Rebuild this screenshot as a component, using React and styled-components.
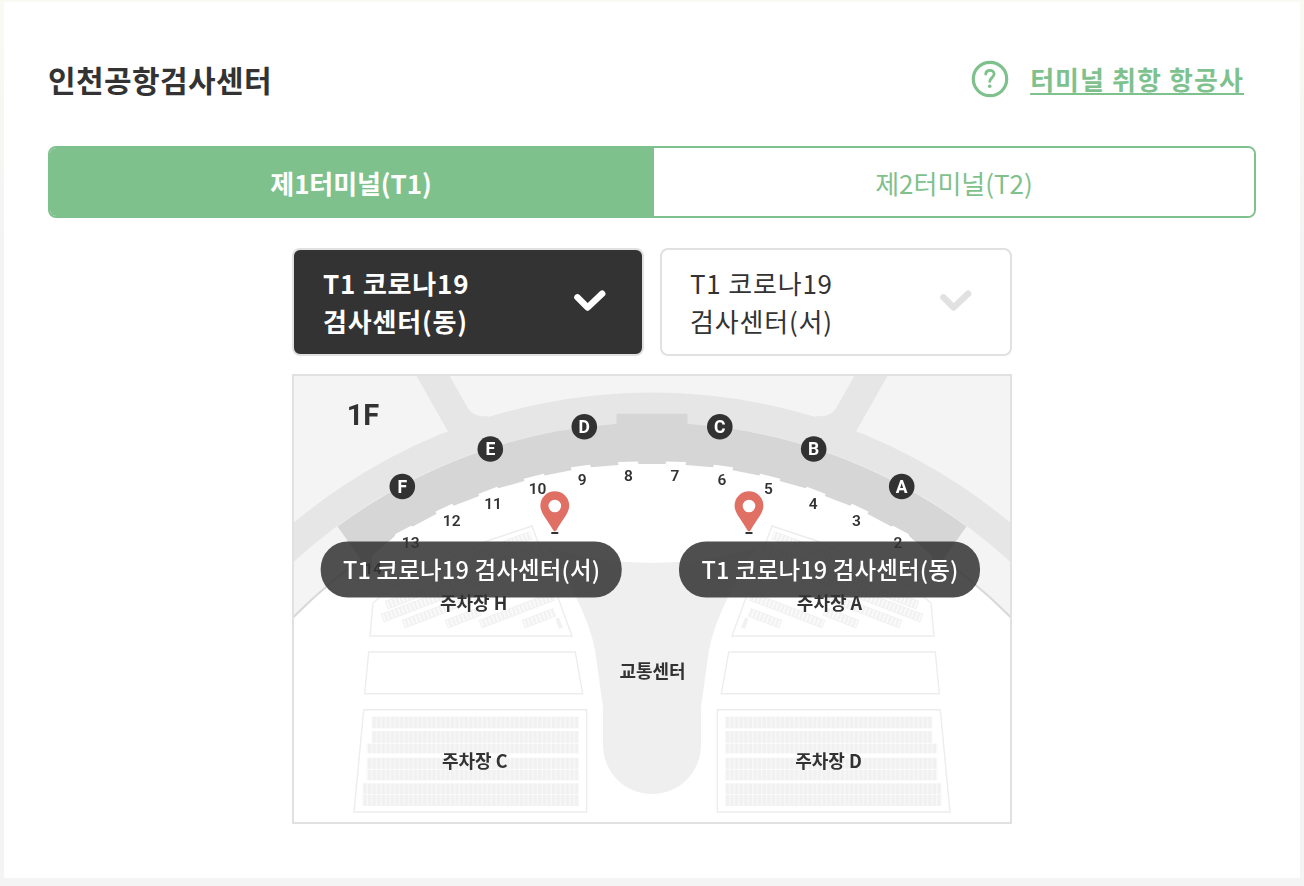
import React, { useState } from 'react';
import styled, { createGlobalStyle, css } from 'styled-components';

const green = '#7fc18d';
const dark = '#333';
const line = '#e1e1e1';

const GlobalStyle = createGlobalStyle`
  * {
    box-sizing: border-box;
  }
  body {
    margin: 0;
    min-height: 886px;
    background: linear-gradient(#f9faf1 0, #f4f4f4 240px);
    color: ${dark};
    font-family: 'Noto Sans CJK KR', 'Noto Sans', sans-serif;
  }
  button {
    font-family: inherit;
    cursor: pointer;
  }
`

const Card = styled.section`
  margin: 0 4px;
  height: 878px;
  border-top: 2px solid #fafaf3;
  padding: 53px 44px 0;
  background: #fff;
`

const Header = styled.header`
  display: flex;
  align-items: center;
  justify-content: space-between;
  height: 48px;
  padding-right: 12px;
`

const Title = styled.h2`
  margin: 0;
  font-size: 30px;
  font-weight: 700;
  line-height: 46px;
  letter-spacing: 0.4px;
`

const HelpLink = styled.a`
  display: flex;
  align-items: center;
  gap: 21px;
  color: ${green};
  font-size: 26px;
  font-weight: 700;
  line-height: 42px;
  letter-spacing: 1.07px;
  text-decoration: none;
`

const LinkText = styled.span`
  text-decoration: underline;
  text-decoration-thickness: 2px;
  text-decoration-skip-ink: none;
  text-underline-offset: 3px;
`

const Tabs = styled.div`
  display: flex;
  height: 72px;
  margin-top: 43px;
  border: 2px solid ${green};
  border-radius: 8px;
  overflow: hidden;
`

const Tab = styled.button`
  width: 602px;
  padding: 0;
  border: 0;
  background: #fff;
  color: ${green};
  font-size: 26px;
  font-weight: 400;

  & + & {
    border-left: 2px solid ${green};
  }
  ${props => props.$active && css`
    background: ${green};
    color: #fff;
    font-weight: 700;
    letter-spacing: -0.1px;
  `}
`

const Content = styled.div`
  width: 720px;
  margin: 30px auto 0;
`

const Centers = styled.div`
  display: grid;
  grid-template-columns: 1fr 1fr;
  gap: 16px;
`

const CenterButton = styled.button`
  display: flex;
  align-items: center;
  justify-content: space-between;
  height: 108px;
  padding: 0 38px 0 28px;
  border: 2px solid ${line};
  border-radius: 8px;
  background: ${props => props.$active ? dark : '#fff'};
  color: ${props => props.$active ? '#fff' : dark};
  font-size: 26px;
  font-weight: ${props => props.$active ? 700 : 400};
  line-height: 38px;
  letter-spacing: 0.8px;
  text-align: left;

  &:first-child {
    padding: 0 36px 0 29px;
  }
  svg {
    margin-bottom: 2px;
    color: ${props => props.$active ? '#fff' : line};
  }
`

const MapFrame = styled.div`
  height: 450px;
  margin-top: 18px;
  border: 2px solid ${line};
  background: #fff;

  svg {
    display: block;
  }
`

const MapText = styled.text`
  fill: ${props => props.$light ? '#fff' : dark};
  font-family: ${props => props.$latin ? "Roboto, 'Noto Sans CJK KR', sans-serif" : "'Noto Sans CJK KR', sans-serif"};
  font-size: ${props => props.$size || 18}px;
  font-weight: ${props => props.$weight || 500};
  text-anchor: middle;
`

const HelpIcon = () => (
  <svg width="38" height="38" viewBox="0 0 38 38" fill="none" stroke="currentColor">
    <circle cx="19" cy="19" r="16.7" strokeWidth="3.2" />
    <path d="M14.7 14.2c.2-2.4 1.9-3.8 4.2-3.8 2.4 0 4.2 1.5 4.2 3.7 0 3.5-4.3 3.5-4.3 7.3" strokeWidth="2.8" strokeLinecap="round" />
    <circle cx="18.7" cy="26.2" r="1.8" fill="currentColor" stroke="none" />
  </svg>
)

const Check = () => (
  <svg width="32" height="22" viewBox="0 0 32 22" fill="none" stroke="currentColor" strokeWidth="6.4" strokeLinecap="round" strokeLinejoin="round">
    <path d="M3.4 7.3 13.6 17.5 28.2 3.6" />
  </svg>
)

// upper-left half of the boarding gates edge, from gate 13 to gate 8
const gateEdge = [
  [372, 556], [395, 536], [395, 534.3], [411, 525.7], [412.7, 526.5], [436.7, 513.7],
  [435.3, 511.7], [452, 503.7], [453.7, 505.7], [479.3, 496], [478.3, 494], [497, 486.7],
  [498.3, 488.3], [524.3, 481], [523.7, 478.7], [543.7, 473.7], [544.5, 475.5], [571.5, 470.3],
  [571, 467.3], [590, 464.7], [591, 467.3], [618.5, 465], [618, 462], [638, 461.5], [638.5, 464],
]
const hall = [
  [372, 600],
  ...gateEdge,
  ...[...gateEdge].reverse().map(([x, y]) => [1304 - x, y]),
  [932, 600],
].join(' ')

const gates = [
  ['14', 373, 574], ['13', 410.7, 547.5], ['12', 451.7, 525.5], ['11', 493, 508.5], ['10', 537.5, 494],
  ['9', 582.3, 484.5], ['8', 628.5, 480.5], ['7', 675, 480.5], ['6', 722, 484.5], ['5', 768.5, 494],
  ['4', 813.3, 508.5], ['3', 856.5, 525.5], ['2', 898, 547.5],
]

const counters = [
  ['F', 402.3, 486.5], ['E', 490.3, 449], ['D', 584.3, 426.7],
  ['C', 719.8, 426.7], ['B', 813.7, 449], ['A', 901.7, 486.5],
]

const stallRows = [
  [371.7, 716.7, 11.6], [371.7, 731, 11.8], [366.7, 743.6, 9.8], [366.7, 757.7, 11.2],
  [366.7, 769.6, 10.7], [362.7, 783.3, 11.1], [362.7, 795, 11],
]

const slantedRows = [
  [381, 615, 190], [402, 621, 80], [445, 621, 36], [479, 621, 88], [522, 621, 34],
  [385, 602, 160], [430, 570, 120],
]

const Parking = () => (
  <g>
    <g fill="#fff" stroke="#ededed" strokeWidth="1.4">
      <path d="M532 526 481 543 392 587 373 603 370 636H572Z" />
      <path d="M368.7 652H575.3L582.7 693.7H364.7Z" />
      <path d="M363.7 709.7H586.7V812H354Z" />
    </g>
    {stallRows.map(([x, y, h]) => (
      <rect key={y} x={x} y={y} width={578.7 - x} height={h} fill="url(#stalls)" />
    ))}
    <g clipPath="url(#lot)">
      {slantedRows.map(([x, y, w]) => (
        <g key={`${x}-${y}`} transform={`translate(${x} ${y}) rotate(-21)`}>
          <rect width={w} height="9" y="-1" fill="url(#stallsOutline)" />
        </g>
      ))}
      <path d="M557 618l4 10" stroke="#f1f1f1" strokeWidth="4" />
    </g>
  </g>
)

const Road = () => <path d="M416 375H449L467.7 407.7Q474 418 488 416L500 440 447.7 431Z" fill="#e6e6e6" />

const Pin = ({ x }) => (
  <g transform={`translate(${x} 506)`}>
    <path d="M-3.5 27h7" stroke={dark} strokeWidth="2" />
    <path fillRule="evenodd" fill="#e07064" d="M0-14.7A14.4 14.4 0 0 0-14.4-.3C-14.4 7.5-6.5 15-1.6 24.3Q0 26.6 1.6 24.3C6.5 15 14.4 7.5 14.4-.3A14.4 14.4 0 0 0 0-14.7ZM0-6.3A6.3 6.3 0 1 1 0 6.3 6.3 6.3 0 0 1 0-6.3Z" />
  </g>
)

const Label = ({ x, children }) => (
  <g>
    <rect x={x - 150.5} y="541.5" width="301" height="56" rx="27" fill="#333" fillOpacity="0.86" />
    <MapText x={x + 0.4} y="578.5" $size={23.5} $weight={500} $light textLength="257">{children}</MapText>
  </g>
)

const TerminalMap = () => (
  <svg width="716" height="446" viewBox="294 376 716 446">
    <defs>
      <pattern id="stalls" width="4.6" height="30" patternUnits="userSpaceOnUse">
        <rect width="4.6" height="30" fill="#f8f8f8" />
        <rect width="3.2" height="30" fill="#f1f1f1" />
      </pattern>
      <pattern id="stallsOutline" width="4" height="9" y="-1" patternUnits="userSpaceOnUse">
        <rect x="0.5" y="0.5" width="3" height="8" fill="#fafafa" stroke="#f1f1f1" />
      </pattern>
      <clipPath id="lot">
        <path d="M530 531 484 547 396 590 377 606 374 630H566Z" />
      </clipPath>
      <filter id="soft" x="0" y="0" width="1" height="1">
        <feGaussianBlur stdDeviation="0.6" />
      </filter>
    </defs>

    <g filter="url(#soft)">
      <rect x="290" y="372" width="724" height="454" fill="#f4f4f4" />
      <Road />
      <g transform="translate(1304) scale(-1 1)"><Road /></g>
      <circle cx="652" cy="950.5" r="558" fill="#e6e6e6" />
      <circle cx="652" cy="952.5" r="530" fill="#f4f4f4" />
      <circle cx="652" cy="970" r="503" fill="#fff" stroke="#d8d8d8" strokeWidth="2" />

      <path d="M337.5 526.5A530 530 0 0 1 616.5 423.7V413.7H687.5V423.7A530 530 0 0 1 966.5 526.5L937 568H367Z" fill="#d6d6d6" />
      <polygon points={hall} fill="#fff" />
      <path d="M548 548Q600 563 652 563T756 548L728 597Q713 628 709 650L701 707V745A49 49 0 0 1 603 745V707L595 650Q591 628 576 597Z" fill="#efefef" />

      <Parking />
      <g transform="translate(1304) scale(-1 1)"><Parking /></g>

      <MapText x="363" y="424.7" $size={29} $weight={700} $latin>1F</MapText>
      {gates.map(([name, x, y]) => (
        <MapText key={name} x={x} y={y} $size={15.5} $weight={600} $latin>{name}</MapText>
      ))}
      {counters.map(([name, x, y]) => (
        <g key={name}>
          <circle cx={x} cy={y} r="12.8" fill={dark} />
          <MapText x={x} y={y + 6.3} $size={17.5} $weight={700} $light $latin>{name}</MapText>
        </g>
      ))}
      <MapText x="473.7" y="609.5" $weight={700}>주차장 H</MapText>
      <MapText x="829.5" y="609.5" $weight={700}>주차장 A</MapText>
      <MapText x="474.7" y="767.5" $weight={700}>주차장 C</MapText>
      <MapText x="828.5" y="767.5" $weight={700}>주차장 D</MapText>
      <MapText x="652.5" y="677.5" $weight={700}>교통센터</MapText>

      <Pin x={554.8} />
      <Pin x={749} />
      <Label x={471.2}>T1 코로나19 검사센터(서)</Label>
      <Label x={829.5}>T1 코로나19 검사센터(동)</Label>
    </g>
  </svg>
)

const tabs = ['제1터미널(T1)', '제2터미널(T2)']
const centers = ['검사센터(동)', '검사센터(서)']

const App = () => {
  const [tab, setTab] = useState(0)
  const [center, setCenter] = useState(0)

  return (
    <>
      <GlobalStyle />
      <Card>
        <Header>
          <Title>인천공항검사센터</Title>
          <HelpLink href="#">
            <HelpIcon />
            <LinkText>터미널 취항 항공사</LinkText>
          </HelpLink>
        </Header>
        <Tabs>
          {tabs.map((name, i) => (
            <Tab key={name} $active={tab === i} onClick={() => setTab(i)}>{name}</Tab>
          ))}
        </Tabs>
        <Content>
          <Centers>
            {centers.map((name, i) => (
              <CenterButton key={name} $active={center === i} onClick={() => setCenter(i)}>
                <span>T1 코로나19<br />{name}</span>
                <Check />
              </CenterButton>
            ))}
          </Centers>
          <MapFrame>
            <TerminalMap />
          </MapFrame>
        </Content>
      </Card>
    </>
  )
}

export default App;
